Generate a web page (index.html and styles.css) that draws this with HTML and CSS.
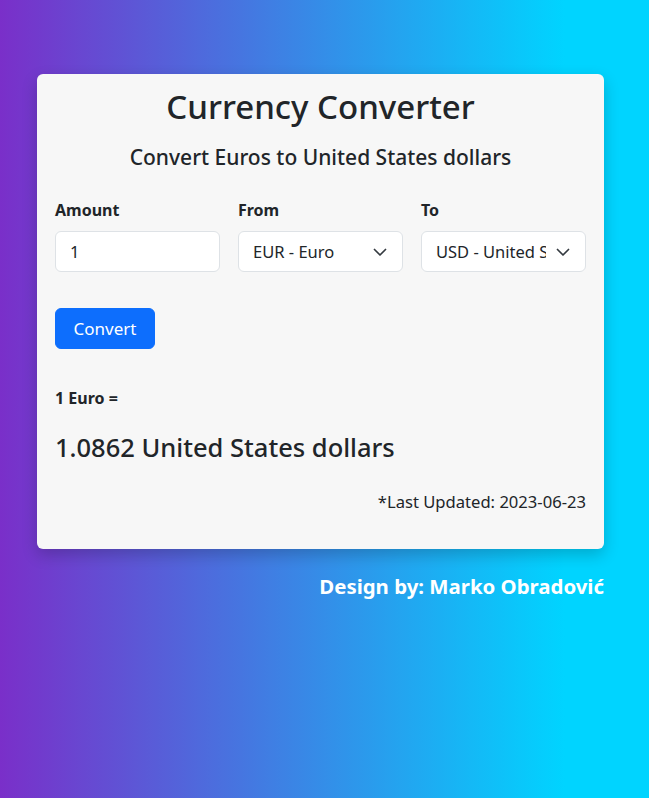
FILE: index.html
```html
<!DOCTYPE html>
<html lang="en">
<head>
<meta charset="utf-8">
<title>Currency Converter</title>
<link rel="stylesheet" href="styles.css">
</head>
<body>
<main class="page">
  <section class="card">
    <h1 class="title">Currency Converter</h1>
    <h2 class="subtitle">Convert Euros to United States dollars</h2>
    <div class="fields">
      <label class="field">
        <span class="label">Amount</span>
        <span class="control">1</span>
      </label>
      <label class="field">
        <span class="label">From</span>
        <span class="control select"><span class="value">EUR - Euro</span>
          <svg class="chev" width="14" height="14" viewBox="0 0 14 14"><path d="M1.5 4.5l5.5 5.5 5.5-5.5" fill="none" stroke="#343a40" stroke-width="1.7" stroke-linecap="round" stroke-linejoin="round"/></svg>
        </span>
      </label>
      <label class="field">
        <span class="label">To</span>
        <span class="control select"><span class="value">USD - United States dollar</span>
          <svg class="chev" width="14" height="14" viewBox="0 0 14 14"><path d="M1.5 4.5l5.5 5.5 5.5-5.5" fill="none" stroke="#343a40" stroke-width="1.7" stroke-linecap="round" stroke-linejoin="round"/></svg>
        </span>
      </label>
    </div>
    <button class="btn">Convert</button>
    <p class="rate-from">1 Euro =</p>
    <p class="rate-to">1.0862 United States dollars</p>
    <p class="updated">*Last Updated: 2023-06-23</p>
  </section>
  <p class="credit">Design by: Marko Obradović</p>
</main>
</body>
</html>
```
FILE: styles.css
```css
* { box-sizing: border-box; }
html, body { margin: 0; height: 100%; }
body {
  font-family: "Noto Sans", "Open Sans", sans-serif;
  color: #212529;
  background: linear-gradient(90deg, #7a2fc9 0%, #00d4ff 87%);
}
.page {
  padding: 74px 45px 0 37px;
}
.card {
  background: #f7f7f7;
  border-radius: 6px;
  box-shadow: 0 6px 16px rgba(0,0,0,0.2);
  padding: 10px 18px 35px;
  display: flex;
  flex-direction: column;
}
.title {
  margin: 0;
  text-align: center;
  font-size: 33px;
  font-weight: 500;
  line-height: 46px;
}
.subtitle {
  margin: 14px 0 0;
  text-align: center;
  font-size: 21px;
  font-weight: 500;
  line-height: 26px;
}
.fields {
  margin-top: 28px;
  display: grid;
  grid-template-columns: repeat(3, minmax(0, 1fr));
  column-gap: 18px;
}
.field { display: flex; flex-direction: column; min-width: 0; }
.label {
  font-size: 16px;
  font-weight: 700;
  line-height: 24px;
  margin-bottom: 9px;
}
.control {
  height: 41px;
  background: #fff;
  border: 1px solid #dee2e6;
  border-radius: 6px;
  padding: 0 14px;
  display: flex;
  align-items: center;
  font-size: 16.5px;
  overflow: hidden;
}
.select { padding-right: 15px; }
.value { flex: 1; min-width: 0; white-space: nowrap; overflow: hidden; }
.chev { flex: none; margin-left: 10px; }
.btn {
  align-self: flex-start;
  margin-top: 36px;
  width: 100px;
  height: 41px;
  background: #0d6efd;
  color: #fff;
  border: 1px solid #0d6efd;
  border-radius: 6px;
  font-family: inherit;
  font-size: 17px;
}
.rate-from {
  margin: 37px 0 0;
  font-size: 16px;
  font-weight: 700;
  line-height: 24px;
}
.rate-to {
  margin: 21px 0 0;
  font-size: 25.5px;
  font-weight: 500;
  line-height: 32px;
}
.updated {
  margin: 27px 0 0;
  text-align: right;
  font-size: 16.6px;
  line-height: 24px;
}
.credit {
  margin: 23px 0 0;
  text-align: right;
  color: #fff;
  font-size: 20.4px;
  font-weight: 700;
}
```
